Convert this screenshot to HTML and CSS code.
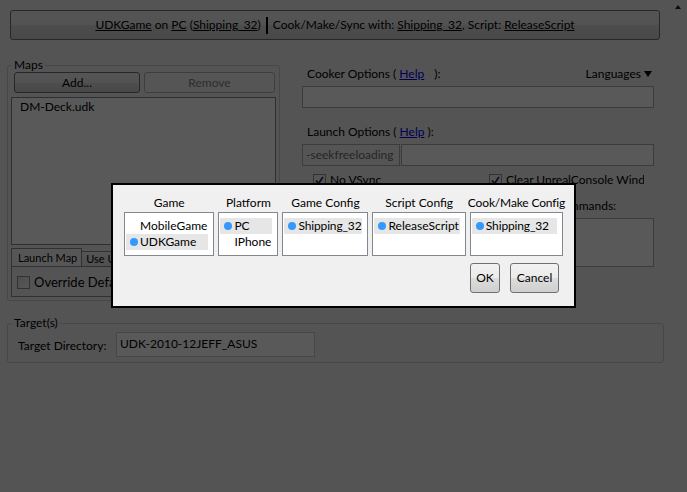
FILE: index.html
```html
<!DOCTYPE html>
<html>
<head>
<meta charset="utf-8">
<link rel="stylesheet" href="styles.css">
</head>
<body>
<div class="app">
  <div class="top-row">
    <div class="summary-bar">
      <span><u>UDKGame</u> on <u>PC</u> (<u>Shipping_32</u>)</span>
      <span class="sep"></span>
      <span>Cook/Make/Sync with: <u>Shipping_32</u>, Script: <u>ReleaseScript</u></span>
    </div>
    <svg class="corner-arrow" width="6" height="4" viewBox="0 0 6 4"><polygon points="3,0 6,4 0,4" fill="#222"/></svg>
  </div>

  <div class="main">
    <fieldset class="group maps">
      <legend>Maps</legend>
      <div class="map-buttons">
        <button class="btn add">Add...</button>
        <button class="btn remove" disabled>Remove</button>
      </div>
      <div class="listbox">
        <div class="list-item">DM-Deck.udk</div>
      </div>
      <div class="tabs">
        <div class="tab-headers">
          <span class="tab active">Launch Map</span>
          <span class="tab">Use UnrealFrontend</span>
        </div>
        <div class="tab-panel">
          <label class="check big"><span class="cbox"></span>Override Default Map</label>
        </div>
      </div>
    </fieldset>

    <div class="options">
      <div class="opt-head">
        <span>Cooker Options ( <a class="link">Help</a><span class="gap"></span>):</span>
        <span class="lang">Languages <svg width="8" height="6" viewBox="0 0 8 6"><polygon points="0,0 8,0 4,6" fill="#000"/></svg></span>
      </div>
      <div class="textbox cooker-box"></div>
      <div class="label">Launch Options ( <a class="link">Help</a> ):</div>
      <div class="launch-row">
        <div class="textbox ro">-seekfreeloading</div>
        <div class="textbox grow"></div>
      </div>
      <div class="opt-grid">
        <div class="opt-col first">
          <label class="check"><span class="cbox on"><svg width="11" height="11" viewBox="0 0 11 11"><path d="M2 5.5 L4.5 8.5 L9 2" fill="none" stroke="#2a2a6a" stroke-width="1.8"/></svg></span>No VSync</label>
        </div>
        <div class="opt-col second">
          <label class="check clip"><span class="cbox on"><svg width="11" height="11" viewBox="0 0 11 11"><path d="M2 5.5 L4.5 8.5 L9 2" fill="none" stroke="#2a2a6a" stroke-width="1.8"/></svg></span><span class="clip-text">Clear UnrealConsole Window</span></label>
          <div class="cmd-label">Additional Commands:</div>
          <div class="textbox cmd-box"></div>
        </div>
      </div>
    </div>
  </div>

  <fieldset class="group targets">
    <legend>Target(s)</legend>
    <div class="target-row">
      <span class="target-label">Target Directory:</span>
      <div class="textbox target-box">UDK-2010-12JEFF_ASUS</div>
    </div>
  </fieldset>
</div>

<div class="dim"></div>

<div class="dialog">
  <div class="cols">
    <div class="col">
      <div class="col-title">Game</div>
      <div class="lb">
        <div class="item"><span class="dot"></span>MobileGame</div>
        <div class="item sel"><span class="dot"></span>UDKGame</div>
      </div>
    </div>
    <div class="col">
      <div class="col-title">Platform</div>
      <div class="lb">
        <div class="item sel"><span class="dot"></span>PC</div>
        <div class="item"><span class="dot"></span>IPhone</div>
      </div>
    </div>
    <div class="col">
      <div class="col-title">Game Config</div>
      <div class="lb">
        <div class="item sel tight"><span class="dot"></span>Shipping_32</div>
      </div>
    </div>
    <div class="col">
      <div class="col-title">Script Config</div>
      <div class="lb">
        <div class="item sel"><span class="dot"></span>ReleaseScript</div>
      </div>
    </div>
    <div class="col">
      <div class="col-title tight">Cook/Make Config</div>
      <div class="lb">
        <div class="item sel tight"><span class="dot"></span>Shipping_32</div>
      </div>
    </div>
  </div>
  <div class="actions">
    <button class="dbtn ok">OK</button>
    <button class="dbtn cancel">Cancel</button>
  </div>
</div>
</body>
</html>
```

FILE: styles.css
```css
html, body {
  margin: 0;
}
body {
  width: 687px;
  height: 492px;
  overflow: hidden;
  position: relative;
  background: #f0f0f0;
  font-family: Lato, "Liberation Sans", sans-serif;
  font-size: 12px;
  line-height: 16px;
  color: #000;
}

/* ---------- top summary bar ---------- */
.top-row {
  display: flex;
  align-items: flex-start;
  padding: 10px 0 0 10px;
}
.summary-bar {
  width: 650px;
  height: 30px;
  box-sizing: border-box;
  border: 1px solid #707070;
  border-radius: 3px;
  background: linear-gradient(#f2f2f2, #ebebeb 50%, #dddddd 50%, #cfcfcf);
  display: flex;
  align-items: center;
  justify-content: center;
  white-space: nowrap;
}
.summary-bar u {
  text-decoration: underline;
}
.sep {
  width: 2px;
  height: 17px;
  background: #000;
  margin: 0 5px;
}
.corner-arrow {
  margin: -5px 0 0 15px;
}

/* ---------- main area ---------- */
.main {
  display: flex;
  margin: 19px 0 0 7px;
}
.group {
  border: 1px solid #c5ccd2;
  border-radius: 3px;
  box-sizing: border-box;
  min-width: 0;
}
.group legend {
  padding: 0 2px;
  line-height: 12px;
}
.maps {
  margin: 0;
  width: 273px;
  height: 242px;
  padding: 1px 3px 2px 3px;
}
.maps legend {
  margin-left: 1px;
}
.map-buttons {
  display: flex;
  gap: 4px;
  margin: 0 0 4px 3px;
}
.btn {
  height: 21px;
  box-sizing: border-box;
  border: 1px solid #707070;
  border-radius: 3px;
  background: linear-gradient(#f2f2f2, #ebebeb 50%, #dddddd 50%, #cfcfcf);
  font: inherit;
  padding: 0;
  color: #000;
}
.btn.add { width: 126px; }
.btn.remove {
  width: 131px;
  border-color: #adb2b5;
  background: #f4f4f4;
  color: #838383;
}
.listbox {
  height: 148px;
  box-sizing: border-box;
  border: 1px solid #828790;
  background: #fff;
  padding: 1px 8px;
}
.tabs {
  margin-top: 3px;
}
.tab-headers {
  display: flex;
  align-items: flex-end;
  height: 18px;
  font-size: 11px;
}
.tab {
  box-sizing: border-box;
  border: 1px solid #898c95;
  border-bottom: none;
  white-space: nowrap;
}
.tab.active {
  height: 18px;
  line-height: 17px;
  padding: 0 4px 0 6px;
  background: #f7f7f7;
}
.tab:not(.active) {
  height: 15px;
  line-height: 14px;
  padding: 0 6px 0 4px;
  border-left: none;
  background: linear-gradient(#f3f3f3, #e5e5e5);
}
.tab-panel {
  height: 31px;
  box-sizing: border-box;
  border: 1px solid #898c95;
  padding: 7px 5px 0 5px;
}

.check {
  display: flex;
  align-items: center;
  gap: 4px;
  white-space: nowrap;
}
.check.big {
  font-size: 13px;
}
.cbox {
  width: 13px;
  height: 13px;
  box-sizing: border-box;
  border: 1px solid #8e8f8f;
  background: linear-gradient(135deg, #dcdcdc, #fbfbfb);
  display: flex;
  align-items: center;
  justify-content: center;
  flex: none;
}
.cbox.on {
  background: #f4f4f4;
}

/* ---------- options column ---------- */
.options {
  width: 352px;
  margin-left: 22px;
}
.opt-head {
  display: flex;
  justify-content: space-between;
  padding: 0 2px 0 5px;
  margin-top: 7px;
}
.lang {
  margin-top: -1px;
  display: flex;
  align-items: center;
  gap: 3px;
}
.link {
  color: #0000ee;
  text-decoration: underline;
}
.gap {
  display: inline-block;
  width: 10px;
}
.textbox {
  height: 22px;
  box-sizing: border-box;
  border: 1px solid #abadb3;
  background: #fff;
}
.cooker-box {
  margin-top: 4px;
}
.label {
  margin-top: 16px;
  padding-left: 5px;
}
.launch-row {
  display: flex;
  gap: 1px;
  margin-top: 4px;
}
.textbox.ro {
  width: 98px;
  flex: none;
  background: #f4f4f4;
  color: #6d6d6d;
  padding-left: 3px;
  line-height: 20px;
  white-space: nowrap;
  overflow: hidden;
}
.textbox.grow {
  flex: 1;
}
.opt-grid {
  display: grid;
  grid-template-columns: 187px 165px;
  margin-top: 6px;
}
.opt-col.first {
  padding-left: 11px;
}
.check.clip {
  width: 155px;
  overflow: hidden;
}
.clip-text {
  overflow: hidden;
}
.cmd-label {
  margin-top: 10px;
  padding-left: 8px;
  white-space: nowrap;
}
.cmd-box {
  height: 49px;
  margin-top: 4px;
}

/* ---------- targets ---------- */
.targets {
  width: 657px;
  margin: 16px 0 0 7px;
  padding: 3px 6px 5px 10px;
}
.targets legend {
  margin-left: -6px;
}
.target-row {
  display: flex;
  align-items: center;
}
.target-label {
  width: 98px;
  flex: none;
  margin-top: 3px;
}
.textbox.target-box {
  width: 199px;
  height: 25px;
  padding-left: 3px;
  line-height: 21px;
  border-color: #c9cbd0;
}

/* ---------- modal ---------- */
.dim {
  position: absolute;
  inset: 0;
  background: rgba(0, 0, 0, 0.65);
}
.dialog {
  position: absolute;
  left: 111px;
  top: 183px;
  width: 465px;
  height: 125px;
  box-sizing: border-box;
  border: 2px solid #000;
  background: #f0f0f0;
  padding: 10px 0 0 9px;
}
.cols {
  display: flex;
}
.col {
  display: flex;
  flex-direction: column;
  align-items: stretch;
}
.col-title {
  line-height: 16px;
  margin-bottom: 1px;
  white-space: nowrap;
  text-align: center;
}
.tight {
  letter-spacing: -0.15px;
}
.lb {
  margin: 0 2px;
  min-height: 44px;
  box-sizing: border-box;
  border: 1px solid #828790;
  background: #fff;
  padding: 5px 5px 5px 1px;
  display: flex;
  flex-direction: column;
}
.item {
  display: flex;
  align-items: center;
  height: 16px;
  padding-right: 1px;
  white-space: nowrap;
}
.item.sel {
  background: #e6e6e6;
}
.dot {
  width: 8px;
  height: 8px;
  border-radius: 50%;
  background: #3399ff;
  margin: 0 2px 0 4px;
  flex: none;
}
.item:not(.sel) .dot {
  visibility: hidden;
}
.actions {
  display: flex;
  justify-content: flex-end;
  gap: 10px;
  margin-top: 7px;
  padding-right: 15px;
}
.dbtn {
  height: 30px;
  box-sizing: border-box;
  border: 1px solid #707070;
  border-radius: 3px;
  background: linear-gradient(#f2f2f2, #ebebeb 50%, #dddddd 50%, #cfcfcf);
  font: inherit;
  color: #000;
  padding: 0;
}
.dbtn.ok { width: 30px; }
.dbtn.cancel { width: 49px; }
```
